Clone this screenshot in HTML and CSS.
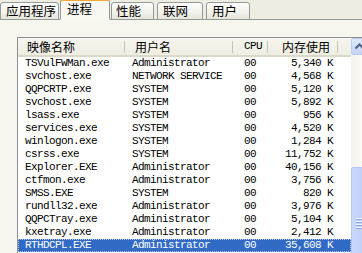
FILE: index.html
```html
<!DOCTYPE html>
<html>
<head>
<meta charset="utf-8">
<link rel="stylesheet" href="styles.css">
</head>
<body>
<div class="window">
  <div class="tabs">
    <div class="tab tab-app">应用程序</div>
    <div class="tab tab-proc active">进程</div>
    <div class="tab tab-perf">性能</div>
    <div class="tab tab-net">联网</div>
    <div class="tab tab-user">用户</div>
  </div>
  <div class="panel">
    <div class="listbox">
      <div class="list">
        <div class="hdr">
          <div class="hc hc-name cjk">映像名称</div>
          <div class="hc hc-user cjk">用户名</div>
          <div class="hc hc-cpu">CPU</div>
          <div class="hc hc-mem cjk">内存使用</div>
          <div class="hc hc-fill"></div>
        </div>
        <div class="rows">
          <div class="row"><span class="c c-name">TSVulFWMan.exe</span><span class="c c-user">Administrator</span><span class="c c-cpu">00</span><span class="c c-mem">5,340 K</span></div>
          <div class="row"><span class="c c-name">svchost.exe</span><span class="c c-user">NETWORK SERVICE</span><span class="c c-cpu">00</span><span class="c c-mem">4,568 K</span></div>
          <div class="row"><span class="c c-name">QQPCRTP.exe</span><span class="c c-user">SYSTEM</span><span class="c c-cpu">00</span><span class="c c-mem">5,120 K</span></div>
          <div class="row"><span class="c c-name">svchost.exe</span><span class="c c-user">SYSTEM</span><span class="c c-cpu">00</span><span class="c c-mem">5,892 K</span></div>
          <div class="row"><span class="c c-name">lsass.exe</span><span class="c c-user">SYSTEM</span><span class="c c-cpu">00</span><span class="c c-mem">956 K</span></div>
          <div class="row"><span class="c c-name">services.exe</span><span class="c c-user">SYSTEM</span><span class="c c-cpu">00</span><span class="c c-mem">4,520 K</span></div>
          <div class="row"><span class="c c-name">winlogon.exe</span><span class="c c-user">SYSTEM</span><span class="c c-cpu">00</span><span class="c c-mem">1,284 K</span></div>
          <div class="row"><span class="c c-name">csrss.exe</span><span class="c c-user">SYSTEM</span><span class="c c-cpu">00</span><span class="c c-mem">11,752 K</span></div>
          <div class="row"><span class="c c-name">Explorer.EXE</span><span class="c c-user">Administrator</span><span class="c c-cpu">00</span><span class="c c-mem">40,156 K</span></div>
          <div class="row"><span class="c c-name">ctfmon.exe</span><span class="c c-user">Administrator</span><span class="c c-cpu">00</span><span class="c c-mem">3,756 K</span></div>
          <div class="row"><span class="c c-name">SMSS.EXE</span><span class="c c-user">SYSTEM</span><span class="c c-cpu">00</span><span class="c c-mem">820 K</span></div>
          <div class="row"><span class="c c-name">rundll32.exe</span><span class="c c-user">Administrator</span><span class="c c-cpu">00</span><span class="c c-mem">3,976 K</span></div>
          <div class="row"><span class="c c-name">QQPCTray.exe</span><span class="c c-user">Administrator</span><span class="c c-cpu">00</span><span class="c c-mem">5,104 K</span></div>
          <div class="row"><span class="c c-name">kxetray.exe</span><span class="c c-user">Administrator</span><span class="c c-cpu">00</span><span class="c c-mem">2,412 K</span></div>
          <div class="row selected"><span class="c c-name">RTHDCPL.EXE</span><span class="c c-user">Administrator</span><span class="c c-cpu">00</span><span class="c c-mem">35,608 K</span></div>
        </div>
      </div>
      <div class="scrollbar">
        <div class="sb-btn">
          <svg width="15" height="15" viewBox="0 0 15 15"><path d="M3.5 9.5 L7.5 5.5 L11.5 9.5" fill="none" stroke="#4d6185" stroke-width="2"/></svg>
        </div>
        <div class="sb-track"></div>
        <div class="sb-thumb"><div class="grip"></div><div class="grip"></div><div class="grip"></div><div class="grip"></div></div>
      </div>
    </div>
  </div>
</div>
</body>
</html>
```
FILE: styles.css
```css
html, body {
  margin: 0;
  padding: 0;
}
body {
  width: 362px;
  height: 253px;
  overflow: hidden;
  background: #efede2;
  font-family: "Liberation Mono", monospace;
}
.window {
  width: 362px;
  height: 253px;
  display: flex;
  flex-direction: column;
  overflow: hidden;
}
.tabs {
  height: 20px;
  flex: none;
  display: flex;
  align-items: flex-end;
  box-sizing: border-box;
  border-bottom: 1px solid #919b9c;
  background: #efede2;
}
.tab {
  box-sizing: border-box;
  height: 18px;
  margin-bottom: -1px;
  border: 1px solid #919b9c;
  border-radius: 3px 3px 0 0;
  background: linear-gradient(#ffffff, #f2f1ea 60%, #e6e4da);
  font-family: "Noto Sans CJK SC", sans-serif;
  font-size: 12.5px;
  line-height: 15px;
  color: #000;
  padding-left: 6px;
  white-space: nowrap;
}
.tab-app { width: 59px; margin-right: 1px; padding-left: 5px; }
.tab-proc { width: 50px; margin-right: 1px; }
.tab-perf { width: 43px; margin-right: 3px; padding-left: 4px; }
.tab-net { width: 46px; margin-right: 3px; padding-left: 5px; }
.tab-user { width: 44px; padding-left: 5px; }
.tab.active {
  height: 21px;
  border-top: 2px solid #f7a935;
  border-bottom: 1px solid #f6f5ee;
  background: #f8f7f1;
  padding-left: 6px;
  line-height: 16px;
  position: relative;
  z-index: 1;
}
.panel {
  flex: 1;
  background: #f6f5ee;
  padding: 17px 0 0 17px;
  overflow: hidden;
}
.listbox {
  width: 352px;
  height: 240px;
  border: 1px solid #8e9294;
  background: #fff;
  display: flex;
}
.list {
  width: 333px;
  flex: none;
}
.hdr {
  height: 19px;
  box-sizing: border-box;
  display: grid;
  grid-template-columns: 107px 108px 35px 70px 1fr;
  background: linear-gradient(#f6f5ee, #efeee3);
  border-bottom: 2px solid #dbd8c8;
  font-size: 11px;
  letter-spacing: -0.6px;
  line-height: 17px;
}
.hc {
  height: 17px;
  white-space: nowrap;
  background: linear-gradient(#c8c4b4, #c8c4b4) right 3px / 1px 12px no-repeat;
}
.cjk {
  font-family: "Noto Sans CJK SC", sans-serif;
  font-size: 12px;
  letter-spacing: 0;
  line-height: 17px;
}
.hc-name { padding-left: 9px; }
.hc-user { padding-left: 10px; }
.hc-cpu { padding-left: 11px; color: #000; }
.hc-mem { text-align: right; padding-right: 8px; }
.hc-fill { background: none; }
.rows {
  font-size: 11px;
  letter-spacing: -0.6px;
  line-height: 13px;
  color: #000;
}
.row {
  display: grid;
  grid-template-columns: 107px 108px 35px 70px 1fr;
  height: 13px;
  white-space: nowrap;
}
.c { overflow: hidden; }
.c-name { padding-left: 7px; }
.c-user { padding-left: 7px; }
.c-cpu { padding-left: 11px; }
.c-mem { text-align: right; padding-right: 5px; }
.row.selected {
  background: #316ac5;
  color: #fff;
  outline: 1px dotted #b8c8e8;
  outline-offset: -1px;
}
.scrollbar {
  width: 17px;
  flex: none;
  display: flex;
  flex-direction: column;
  background: #fbfbf8;
}
.sb-btn {
  height: 17px;
  box-sizing: border-box;
  border: 1px solid #b9cbf3;
  border-radius: 2px;
  background: linear-gradient(#dfe8fd, #c4d4fb);
  display: flex;
  align-items: center;
  justify-content: center;
}
.sb-track {
  height: 112px;
  background: linear-gradient(90deg, #f3f2ec, #fefefb);
}
.sb-thumb {
  flex: 1;
  box-sizing: border-box;
  border: 1px solid #b3c7f2;
  border-radius: 2px;
  background: linear-gradient(90deg, #c9d8fc, #bccdf8);
  display: flex;
  flex-direction: column;
  align-items: center;
  padding-top: 50px;
  gap: 1px;
}
.grip {
  width: 7px;
  height: 1px;
  background: #eef3fe;
  border-bottom: 1px solid #8caae6;
}
```
